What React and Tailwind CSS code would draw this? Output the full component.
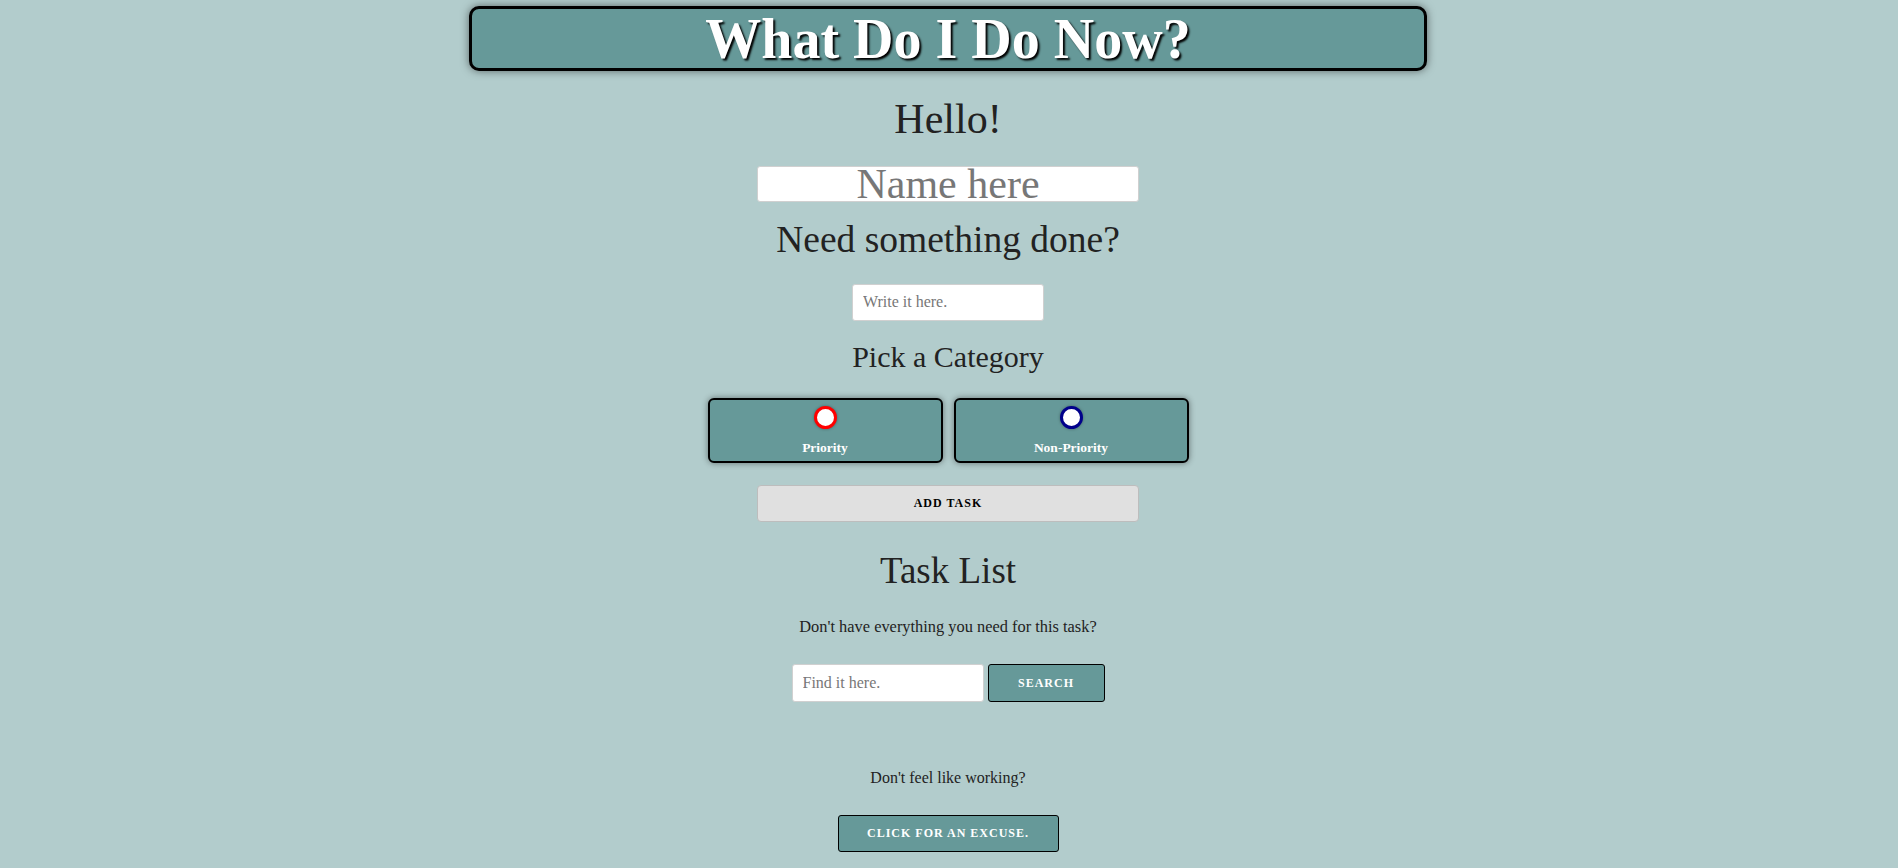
import React, { useState } from 'react';

const CategoryButton = ({ label, ring, selected, onClick }) => (
    <button
        onClick={onClick}
        className="w-[235px] h-[65px] flex flex-col items-center pt-[6px] bg-[#669999] border-2 border-black rounded-[6px] shadow-[0_0_6px_rgba(0,0,0,0.45)]"
    >
        <span className={`w-[23px] h-[23px] rounded-full bg-white border-[3px] ${ring} shadow-[0_0_3px_rgba(0,0,0,0.35)]`}>
            {selected && <span className="block w-full h-full rounded-full bg-white" />}
        </span>
        <span className="mt-[12px] text-[13.5px] leading-none font-bold text-white">{label}</span>
    </button>
);

const App = () => {
    const [name, setName] = useState('');
    const [task, setTask] = useState('');
    const [category, setCategory] = useState(null);
    const [query, setQuery] = useState('');

    return (
        <div className="min-h-screen bg-[#b2cccc] text-[#222] font-['Liberation_Serif',serif] flex flex-col items-center pr-[2px] pb-4">
            {/* Title bar */}
            <header className="mt-[6px] w-[958px] h-[65px] flex items-center justify-center bg-[#669999] border-[3px] border-black rounded-[10px] shadow-[0_0_8px_rgba(0,0,0,0.5)]">
                <h1 className="text-[56px] leading-none font-bold text-white [text-shadow:2px_2px_2px_#000]">What Do I Do Now?</h1>
            </header>

            <h2 className="mt-[27px] text-[42px] leading-none">Hello!</h2>
            <input
                value={name}
                onChange={e => setName(e.target.value)}
                placeholder="Name here"
                className="mt-[26px] w-[382px] h-[36px] bg-white border border-[#d0d0d0] rounded-[3px] text-center text-[42px] leading-none placeholder:text-[#777] outline-none"
            />

            <h2 className="mt-[19px] text-[37.5px] leading-none">Need something done?</h2>
            <input
                value={task}
                onChange={e => setTask(e.target.value)}
                placeholder="Write it here."
                className="mt-[25px] w-[192px] h-[37px] bg-white border border-[#d0d0d0] rounded-[3px] px-[10px] text-[16px] placeholder:text-[#777] outline-none"
            />

            <h3 className="mt-[21px] text-[30px] leading-none">Pick a Category</h3>
            <div className="mt-[26px] flex gap-[11px]">
                <CategoryButton label="Priority" ring="border-[#ff0000]" selected={category === 'p'} onClick={() => setCategory('p')} />
                <CategoryButton label="Non-Priority" ring="border-[#00008b]" selected={category === 'n'} onClick={() => setCategory('n')} />
            </div>

            <button className="mt-[22px] w-[382px] h-[37px] bg-[#e0e0e0] border border-[#bdbdbd] rounded-[4px] text-[12px] font-bold tracking-[1px] text-black">
                ADD TASK
            </button>

            <h2 className="mt-[30px] text-[37px] leading-none">Task List</h2>

            <p className="mt-[30px] text-[16.4px] leading-none">Don't have everything you need for this task?</p>
            <div className="mt-[29px] flex gap-[4px]">
                <input
                    value={query}
                    onChange={e => setQuery(e.target.value)}
                    placeholder="Find it here."
                    className="w-[192px] h-[38px] bg-white border border-[#d0d0d0] rounded-[3px] px-[10px] text-[16px] placeholder:text-[#777] outline-none"
                />
                <button className="w-[117px] h-[38px] bg-[#669999] border border-black rounded-[3px] text-[12px] font-bold tracking-[1px] text-white">
                    SEARCH
                </button>
            </div>

            <p className="mt-[68px] text-[16px] leading-none">Don't feel like working?</p>
            <button className="mt-[29px] w-[221px] h-[37px] bg-[#669999] border border-black rounded-[3px] text-[12px] font-bold tracking-[1px] text-white">
                CLICK FOR AN EXCUSE.
            </button>
        </div>
    );
};

export default App;
